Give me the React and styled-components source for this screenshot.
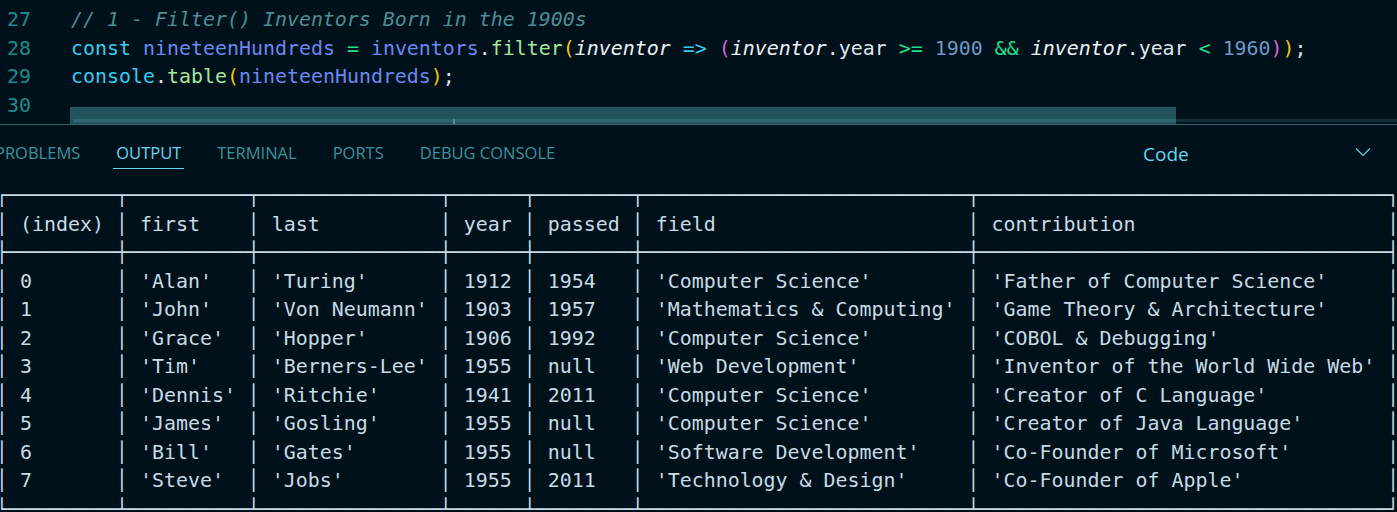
import React from 'react'
import styled, { createGlobalStyle } from 'styled-components'

const GlobalStyle = createGlobalStyle`
  html, body {
    margin: 0;
    padding: 0;
    background: #00111b;
  }
`

const mono = `"DejaVu Sans Mono", "Liberation Mono", monospace`

const inventors = [
  ['0', 'Alan', 'Turing', 1912, 1954, 'Computer Science', 'Father of Computer Science'],
  ['1', 'John', 'Von Neumann', 1903, 1957, 'Mathematics & Computing', 'Game Theory & Architecture'],
  ['2', 'Grace', 'Hopper', 1906, 1992, 'Computer Science', 'COBOL & Debugging'],
  ['3', 'Tim', 'Berners-Lee', 1955, null, 'Web Development', 'Inventor of the World Wide Web'],
  ['4', 'Dennis', 'Ritchie', 1941, 2011, 'Computer Science', 'Creator of C Language'],
  ['5', 'James', 'Gosling', 1955, null, 'Computer Science', 'Creator of Java Language'],
  ['6', 'Bill', 'Gates', 1955, null, 'Software Development', 'Co-Founder of Microsoft'],
  ['7', 'Steve', 'Jobs', 1955, 2011, 'Technology & Design', 'Co-Founder of Apple'],
]

const headers = ['(index)', 'first', 'last', 'year', 'passed', 'field', 'contribution']

// turn a value into what console.table prints for it
const show = (v, i) => {
  if (i === 0) return v
  if (v === null) return 'null'
  if (typeof v === 'number') return String(v)
  return `'${v}'`
}

const buildTable = () => {
  const cells = inventors.map(r => r.map(show))
  const widths = headers.map((h, i) =>
    Math.max(h.length, ...cells.map(r => r[i].length)) + 2
  )
  const rule = (l, m, r) => l + widths.map(w => '─'.repeat(w)).join(m) + r
  const line = vals => '│' + vals.map((v, i) => (' ' + v).padEnd(widths[i])).join('│') + '│'
  return [
    rule('┌', '┬', '┐'),
    line(headers),
    rule('├', '┼', '┤'),
    ...cells.map(line),
    rule('└', '┴', '┘'),
  ].join('\n')
}

const App = () => {
  return (
    <Page>
      <GlobalStyle />
      <Editor>
        <CodeLine>
          <LineNo>27</LineNo>
          <Code><Tok c="#4a8e96" italic>// 1 - Filter() Inventors Born in the 1900s</Tok></Code>
        </CodeLine>
        <CodeLine>
          <LineNo>28</LineNo>
          <Code>
            <Tok c="#33cdef">const</Tok>{' '}
            <Tok c="#6a88f2">nineteenHundreds</Tok>{' '}
            <Tok c="#1fe08a">=</Tok>{' '}
            <Tok c="#6a88f2">inventors</Tok>
            <Tok c="#dce6ea">.</Tok>
            <Tok c="#a3e89c">filter</Tok>
            <Tok c="#f5c400">(</Tok>
            <Tok c="#eef3f5" italic>inventor</Tok>{' '}
            <Tok c="#33cdef">=&gt;</Tok>{' '}
            <Tok c="#d46ad2">(</Tok>
            <Tok c="#eef3f5" italic>inventor</Tok>
            <Tok c="#dce6ea">.year</Tok>{' '}
            <Tok c="#1fe08a">&gt;=</Tok>{' '}
            <Tok c="#6f98c4">1900</Tok>{' '}
            <Tok c="#1fe08a">&amp;&amp;</Tok>{' '}
            <Tok c="#eef3f5" italic>inventor</Tok>
            <Tok c="#dce6ea">.year</Tok>{' '}
            <Tok c="#1fe08a">&lt;</Tok>{' '}
            <Tok c="#6f98c4">1960</Tok>
            <Tok c="#d46ad2">)</Tok>
            <Tok c="#f5c400">)</Tok>
            <Tok c="#dce6ea">;</Tok>
          </Code>
        </CodeLine>
        <CodeLine>
          <LineNo>29</LineNo>
          <Code>
            <Tok c="#33cdef">console</Tok>
            <Tok c="#dce6ea">.</Tok>
            <Tok c="#a3e89c">table</Tok>
            <Tok c="#f5c400">(</Tok>
            <Tok c="#6a88f2">nineteenHundreds</Tok>
            <Tok c="#f5c400">)</Tok>
            <Tok c="#dce6ea">;</Tok>
          </Code>
        </CodeLine>
        <CodeLine>
          <LineNo>30</LineNo>
          <Code />
        </CodeLine>
        <ScrollTrack />
        <ScrollThumb>
          <Marker />
        </ScrollThumb>
      </Editor>

      <Panel>
        <TabBar>
          <Tabs>
            <Tab>PROBLEMS</Tab>
            <Tab active>OUTPUT</Tab>
            <Tab>TERMINAL</Tab>
            <Tab>PORTS</Tab>
            <Tab>DEBUG CONSOLE</Tab>
          </Tabs>
          <Select>
            <span>Code</span>
            <svg width="16" height="10" viewBox="0 0 16 10" fill="none">
              <path d="M1 1.5 L8 8.5 L15 1.5" stroke="#5fd8ee" strokeWidth="1.2" />
            </svg>
          </Select>
        </TabBar>
        <Output>{buildTable()}</Output>
      </Panel>
    </Page>
  )
}

export default App

const Page = styled.div`
  width: 1397px;
  height: 512px;
  overflow: hidden;
  background: #00111b;
  display: flex;
  flex-direction: column;
`

const Editor = styled.div`
  position: relative;
  height: 125px;
  flex: none;
  padding-top: 6px;
  box-sizing: border-box;
  border-bottom: 1px solid #2a6870;
  overflow: hidden;
`

const CodeLine = styled.div`
  display: flex;
  height: 28.6px;
  line-height: 28.6px;
  font-family: ${mono};
  font-size: 19.93px;
  white-space: pre;
`

const LineNo = styled.span`
  width: 24px;
  padding-left: 7px;
  margin-right: 40px;
  text-align: right;
  color: #1b8b8d;
`

const Code = styled.span`
  color: #dce6ea;
`

const Tok = styled.span`
  color: ${p => p.c};
  font-style: ${p => (p.italic ? 'italic' : 'normal')};
`

const ScrollTrack = styled.div`
  position: absolute;
  left: 70px;
  right: 0;
  top: 119px;
  height: 3px;
  background: #14303a;
`

const ScrollThumb = styled.div`
  position: absolute;
  left: 70px;
  width: 1106px;
  top: 107px;
  height: 18px;
  background: #22525a;
  &::after {
    content: '';
    position: absolute;
    left: 3px;
    right: 0;
    top: 12px;
    height: 3px;
    background: #2e696f;
  }
`

const Marker = styled.div`
  position: absolute;
  left: 383px;
  top: 12px;
  width: 2px;
  height: 6px;
  background: #5b8c92;
  z-index: 1;
`

const Panel = styled.div`
  flex: 1;
  display: flex;
  flex-direction: column;
  min-height: 0;
`

const TabBar = styled.div`
  height: 57px;
  flex: none;
  display: flex;
  align-items: flex-start;
  justify-content: space-between;
`

const Tabs = styled.div`
  display: flex;
  gap: 30px;
  margin-left: -8px;
  padding-top: 17px;
`

const Tab = styled.div`
  font-family: "Open Sans", "Noto Sans", sans-serif;
  font-size: 16.5px;
  line-height: 22px;
  padding: 0 3px 4px;
  color: ${p => (p.active ? '#63d9ec' : '#3a939c')};
  border-bottom: 1px solid ${p => (p.active ? '#5fd8ee' : 'transparent')};
`

const Select = styled.div`
  width: 254px;
  display: flex;
  align-items: center;
  justify-content: space-between;
  padding: 15px 26px 0 0;
  box-sizing: border-box;
  font-family: "Open Sans", "Noto Sans", sans-serif;
  font-size: 19px;
  line-height: 28px;
  color: #5fd8ee;
  svg {
    margin-top: -4px;
  }
`

const Output = styled.pre`
  margin: 0 0 0 -4px;
  font-family: ${mono};
  font-size: 19.93px;
  line-height: 28.5px;
  color: #c6dbe4;
`
